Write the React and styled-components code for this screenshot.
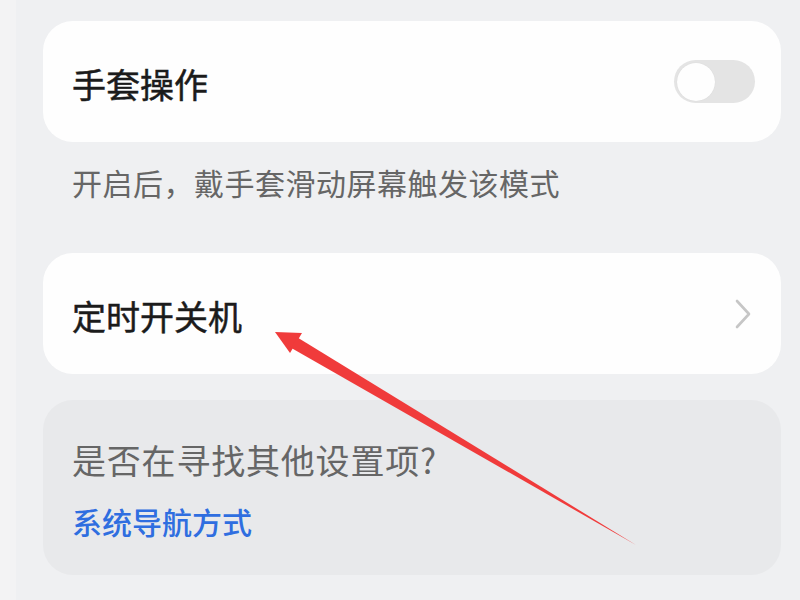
import React from 'react'
import styled, { createGlobalStyle } from 'styled-components'

const GlobalStyle = createGlobalStyle`
	html, body {
		margin: 0;
		padding: 0;
		background: #eff0f2;
	}
	body {
		font-family: 'Noto Sans CJK SC', 'Noto Sans', sans-serif;
	}
`

const Screen = styled.div`
	position: relative;
	width: 800px;
	height: 600px;
	overflow: hidden;
	display: flex;
	background: #eff0f2;
`

const Edge = styled.div`
	width: 16px;
	flex: none;
	background: #f3f3f4;
`

const Content = styled.div`
	flex: 1;
	display: flex;
	flex-direction: column;
	padding: 21px 19px 0 27px;
`

const Card = styled.div`
	height: 121px;
	box-sizing: border-box;
	display: flex;
	align-items: center;
	justify-content: space-between;
	padding: 3px 26px 0 29px;
	background: #fefefe;
	border-radius: 30px;
`

const Title = styled.span`
	font-size: 34px;
	font-weight: 400;
	color: #1b1b1b;
	-webkit-text-stroke: 0.5px #1b1b1b;
`

const Note = styled.p`
	margin: 19px 0 50px 29px;
	font-size: 30px;
	line-height: 42px;
	letter-spacing: 0.5px;
	color: #666666;
`

const Toggle = styled.div`
	width: 81px;
	height: 43px;
	box-sizing: border-box;
	margin-top: -3px;
	border-radius: 22px;
	background: #e4e4e4;
	padding: 3px;
	display: flex;
	align-items: center;
`

const Knob = styled.div`
	width: 38px;
	height: 38px;
	border-radius: 50%;
	background: #fefefe;
	box-shadow: 0 0 1px rgba(0, 0, 0, 0.1);
`

const Chevron = styled.svg`
	width: 18px;
	height: 30px;
	margin-top: -3px;
	margin-right: 3px;
`

const HelpCard = styled.div`
	margin-top: 26px;
	height: 175px;
	box-sizing: border-box;
	padding: 37px 29px 0;
	background: #e8e9eb;
	border-radius: 30px;
	display: flex;
	flex-direction: column;
	gap: 17px;
`

const Question = styled.span`
	font-size: 34px;
	line-height: 46px;
	letter-spacing: 0.8px;
	color: #666666;
`

const Link = styled.a`
	font-size: 30px;
	line-height: 42px;
	font-weight: 500;
	color: #2f6ee0;
	text-decoration: none;
`

const Overlay = styled.svg`
	position: absolute;
	left: 0;
	top: 0;
	pointer-events: none;
`

export default function App() {
	return (
		<>
			<GlobalStyle />
			<Screen>
				<Edge />
				<Content>
					<Card>
						<Title>手套操作</Title>
						<Toggle>
							<Knob />
						</Toggle>
					</Card>
					<Note>开启后，戴手套滑动屏幕触发该模式</Note>
					<Card>
						<Title>定时开关机</Title>
						<Chevron viewBox='0 0 18 30'>
							<path d='M3 2 L15 15 L3 28' fill='none' stroke='#c6c6c6' strokeWidth='2.6' strokeLinecap='round' strokeLinejoin='round' />
						</Chevron>
					</Card>
					<HelpCard>
						<Question>是否在寻找其他设置项?</Question>
						<Link href='#'>系统导航方式</Link>
					</HelpCard>
				</Content>
				{/* red annotation arrow drawn over the screenshot */}
				<Overlay width='800' height='600' viewBox='0 0 800 600'>
					<polygon points='275,332 302,333 290,353' fill='#f03b3b' />
					<polygon points='290.5,347.5 297.5,337.5 636,545' fill='#f03b3b' />
				</Overlay>
			</Screen>
		</>
	)
}
